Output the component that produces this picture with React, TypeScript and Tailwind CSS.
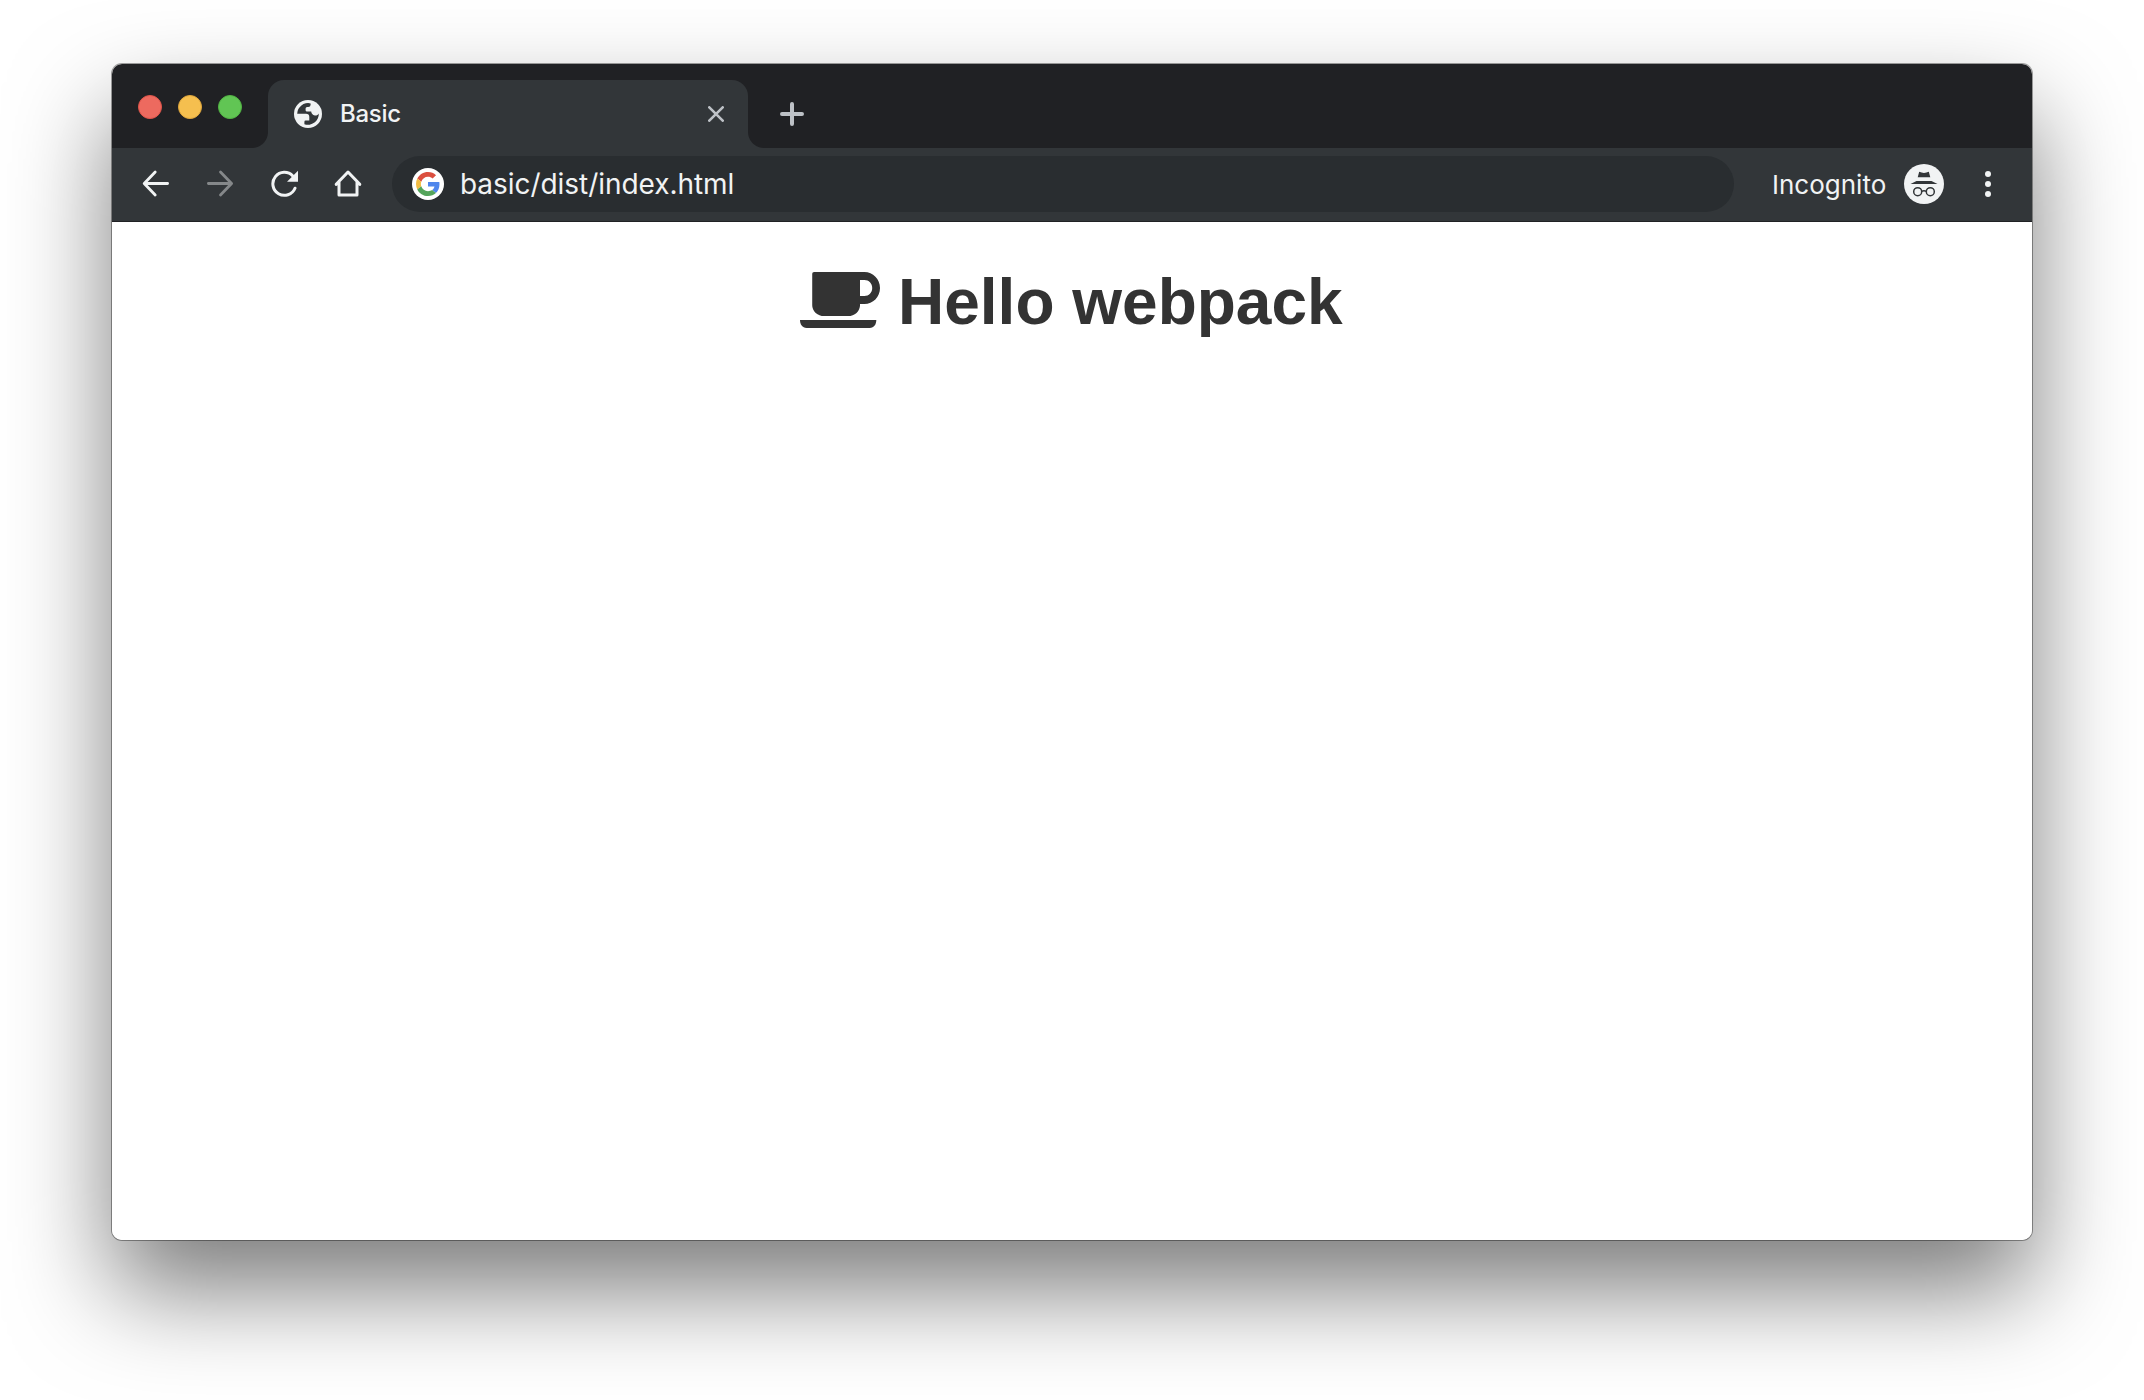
import React from "react";

const INTER = "font-['Inter','Roboto',sans-serif]";

function Lights() {
  return (
    <div className="flex w-[156px] shrink-0 gap-4 pt-[31px] pl-[26px]">
      <span className="size-6 rounded-full border border-[#e0544a] bg-[#ed6a5f]" />
      <span className="size-6 rounded-full border border-[#dfa63b] bg-[#f5bf4f]" />
      <span className="size-6 rounded-full border border-[#51b443] bg-[#61c554]" />
    </div>
  );
}

function Globe() {
  return (
    <svg className="size-7 shrink-0" viewBox="0 0 28 28">
      <circle cx="14" cy="14" r="14" fill="#f1f3f4" />
      <path
        fill="#323639"
        d="M16.6 3.4 A10.9 10.9 0 0 0 3.2 13.8 H12 A3.3 3.3 0 0 1 15.3 17.1 V20.4 H11.6 A1.3 1.3 0 0 0 10.4 21.7 V24.2 A10.9 10.9 0 0 0 24.8 13.4 C23.8 15 22.5 15.6 20.8 15.4 C18.6 15.2 17.4 13.6 17.2 11.6 H13 A1.4 1.4 0 0 1 11.6 10.2 V8.6 A1.5 1.5 0 0 1 13.1 7.1 H14.2 A2.4 2.4 0 0 0 16.6 4.7 Z"
      />
    </svg>
  );
}

function GoogleG() {
  return (
    <span className="grid size-8 shrink-0 place-items-center rounded-full bg-white">
      <svg className="size-6" viewBox="0 0 48 48">
        <path fill="#db4f3f" d="M24 9.5c3.54 0 6.71 1.22 9.21 3.6l6.85-6.85C35.9 2.38 30.47 0 24 0 14.62 0 6.51 5.38 2.56 13.22l7.98 6.19C12.43 13.72 17.74 9.5 24 9.5z" />
        <path fill="#4f86ec" d="M46.98 24.55c0-1.57-.15-3.09-.38-4.55H24v9.02h12.94c-.58 2.96-2.26 5.48-4.78 7.18l7.73 6c4.51-4.18 7.09-10.36 7.09-17.65z" />
        <path fill="#f2bc42" d="M10.53 28.59c-.48-1.45-.76-2.99-.76-4.59s.27-3.14.76-4.59l-7.98-6.19C.92 16.46 0 20.12 0 24c0 3.88.92 7.54 2.56 10.78l7.97-6.19z" />
        <path fill="#54a45b" d="M24 48c6.48 0 11.93-2.13 15.89-5.81l-7.73-6c-2.15 1.45-4.92 2.3-8.16 2.3-6.26 0-11.57-4.22-13.47-9.91l-7.98 6.19C6.51 42.62 14.62 48 24 48z" />
      </svg>
    </span>
  );
}

function Incognito() {
  return (
    <svg className="size-10 shrink-0" viewBox="0 0 40 40">
      <circle cx="20" cy="20" r="20" fill="#f1f3f4" />
      <g fill="#323639">
        <path d="M15.2 7.8 Q20 10 24.8 7.8 L26.3 13.3 H13.7 Z" />
        <path d="M12.5 17 H27.5 L33.5 20 H6.5 Z" />
      </g>
      <g fill="none" stroke="#323639" strokeWidth="1.5">
        <circle cx="13.7" cy="27.7" r="4" />
        <circle cx="26.3" cy="27.7" r="4" />
        <path d="M17.6 27.3 Q20 26 22.4 27.3" />
      </g>
    </svg>
  );
}

function TabStrip() {
  return (
    <div className="flex h-[84px] bg-[#202124]">
      <Lights />
      <div className="relative mt-4 flex h-[68px] w-[480px] items-center rounded-t-2xl bg-[#323639] pl-[26px]">
        <span className="absolute bottom-0 -left-4 size-4 bg-[radial-gradient(circle_at_0_0,#202124_15.5px,#323639_16.5px)]" />
        <span className="absolute -right-4 bottom-0 size-4 bg-[radial-gradient(circle_at_100%_0,#202124_15.5px,#323639_16.5px)]" />
        <Globe />
        <span className={`ml-[18px] text-2xl leading-7 font-medium tracking-[-0.3px] text-[#f1f3f4] ${INTER}`}>Basic</span>
        <svg className="mr-6 ml-auto size-4 text-[#bdc1c6]" viewBox="0 0 16 16" stroke="currentColor" strokeWidth="2.6" strokeLinecap="round">
          <path d="M1.3 1.3 14.7 14.7 M14.7 1.3 1.3 14.7" />
        </svg>
      </div>
      <svg className="mt-[38px] ml-8 size-6" viewBox="0 0 24 24" stroke="#bdc1c6" strokeWidth="4" strokeLinecap="round">
        <path d="M2 12 H22 M12 2 V22" />
      </svg>
    </div>
  );
}

function Toolbar() {
  return (
    <div className="flex h-[74px] border-b border-[#202124] bg-[#323639]">
      <svg className="mt-[21px] ml-[30px] size-7 shrink-0" viewBox="0 0 28 28" fill="none" stroke="#f1f3f4" strokeWidth="2.8" strokeLinecap="round" strokeLinejoin="round">
        <path d="M13.2 3 L2.2 14.5 L13.2 26 M2.5 14.5 H25.6" />
      </svg>
      <svg className="mt-[21px] ml-9 size-7 shrink-0" viewBox="0 0 28 28" fill="none" stroke="#85888a" strokeWidth="2.8" strokeLinecap="round" strokeLinejoin="round">
        <path d="M14.5 3 L25.6 14.5 L14.5 26 M25.3 14.5 H2.4" />
      </svg>
      <svg className="mt-[21px] ml-9 size-7 shrink-0" viewBox="0 0 28 28" fill="none">
        <path stroke="#f1f3f4" strokeWidth="3" strokeLinecap="round" d="M22.8 7 A11.5 11.5 0 1 0 25 19.2" />
        <path fill="#f1f3f4" d="M28 1.8 V12.8 H17 Z" />
      </svg>
      <svg className="mt-[21px] ml-9 size-7 shrink-0" viewBox="0 0 28 28" fill="none" stroke="#f1f3f4" strokeWidth="3" strokeLinecap="round" strokeLinejoin="round">
        <path d="M2.2 15.3 L14 3 L25.8 15.3 M5 13 V26 H23 V13" />
      </svg>
      <div className="mt-2 ml-[30px] flex h-14 w-[1342px] shrink-0 items-center rounded-full bg-[#292d30] pl-5">
        <GoogleG />
        <span className={`ml-4 text-[28px] leading-8 tracking-[-0.05px] text-[#f1f3f4] ${INTER}`}>basic/dist/index.html</span>
      </div>
      <div className="flex h-[72px] items-center pl-[38px]">
        <span className={`w-[114px] text-[26px] whitespace-nowrap text-[#f1f3f4] ${INTER}`}>Incognito</span>
        <span className="ml-[18px]">
          <Incognito />
        </span>
        <div className="ml-[41px] flex flex-col gap-1">
          <span className="size-1.5 rounded-full bg-[#f1f3f4]" />
          <span className="size-1.5 rounded-full bg-[#f1f3f4]" />
          <span className="size-1.5 rounded-full bg-[#f1f3f4]" />
        </div>
      </div>
    </div>
  );
}

export default function App() {
  return (
    <div className="h-[1400px] w-[2144px] overflow-hidden bg-white pt-16 pl-28">
      <div className="h-[1176px] w-[1920px] rounded-[10px] shadow-[0_0_0_1px_rgba(0,0,0,0.36),0_50px_100px_rgba(0,0,0,0.52)]">
        <div className="h-full overflow-hidden rounded-[10px] bg-white">
          <TabStrip />
          <Toolbar />
          <main className="flex pt-11 pl-[688px] text-[#333333]">
            <svg className="mt-[6px] h-14 w-20" viewBox="54 66 216 168" preserveAspectRatio="none" fill="currentColor">
              <path
                fillRule="evenodd"
                d="M92 66 H228 C251 66 270 87 270 114 C270 141 251 162 228 162 H216 V166 A32 32 0 0 1 184 198 H119 A32 32 0 0 1 87 166 V71 A5 5 0 0 1 92 66 Z M216 90 V138 H228 C240 138 249 128 249 114 C249 100 240 90 228 90 Z"
              />
              <path d="M54 210 H260 C260 223 254 234 242 234 H72 C60 234 54 223 54 210 Z" />
            </svg>
            <h1 className="ml-[18px] text-[64px] leading-[72px] font-bold font-['Liberation_Sans',sans-serif]">Hello webpack</h1>
          </main>
        </div>
      </div>
    </div>
  );
}
